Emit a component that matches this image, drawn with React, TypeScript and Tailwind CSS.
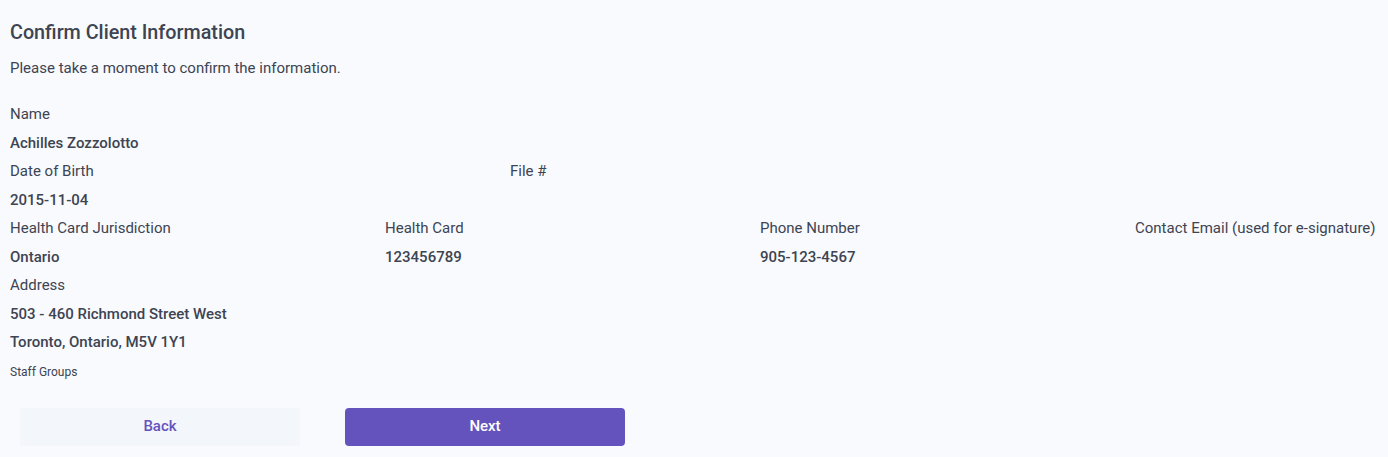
const rows = [
  [{ label: 'Name', value: ['Achilles Zozzolotto'], w: 'w-[500px]' }],
  [
    { label: 'Date of Birth', value: ['2015-11-04'], w: 'w-[500px]' },
    { label: 'File #', value: [], w: 'w-[500px]' },
  ],
  [
    { label: 'Health Card Jurisdiction', value: ['Ontario'], w: 'w-[375px]' },
    { label: 'Health Card', value: ['123456789'], w: 'w-[375px]' },
    { label: 'Phone Number', value: ['905-123-4567'], w: 'w-[375px]' },
    { label: 'Contact Email (used for e-signature)', value: [], w: 'w-[375px]' },
  ],
  [
    {
      label: 'Address',
      value: ['503 - 460 Richmond Street West', 'Toronto, Ontario, M5V 1Y1'],
      w: 'w-[500px]',
    },
  ],
]

export default function App() {
  return (
    <div
      className="min-h-[457px] w-full overflow-hidden bg-[#f9fafd] text-[#3d4452]"
      style={{ fontFamily: 'Roboto, "Liberation Sans", sans-serif' }}
    >
      <div className="px-[10px] pt-[19px]">
        <h1 className="text-[19.75px] leading-[28px] font-medium">Confirm Client Information</h1>
        <p className="mt-[11px] text-[15px] leading-[20px]">
          Please take a moment to confirm the information.
        </p>

        <div className="mt-[22px] text-[15px] leading-[28.5px]">
          {rows.map((row, i) => (
            <div key={i} className="flex whitespace-nowrap">
              {row.map((f) => (
                <div key={f.label} className={`${f.w} shrink-0`}>
                  <div>{f.label}</div>
                  {f.value.map((v) => (
                    <div key={v} className="font-medium">
                      {v}
                    </div>
                  ))}
                </div>
              ))}
            </div>
          ))}
          <div className="text-[12px] leading-[30px]">Staff Groups</div>
        </div>

        <div className="mt-[21px] flex gap-[45px] pl-[10px]">
          <button className="h-[38px] w-[280px] rounded-[4px] bg-[#f3f6fb] text-[15px] font-medium text-[#6553bd]">
            Back
          </button>
          <button className="h-[38px] w-[280px] rounded-[4px] bg-[#6553bd] text-[15px] font-medium text-white">
            Next
          </button>
        </div>
      </div>
    </div>
  )
}
